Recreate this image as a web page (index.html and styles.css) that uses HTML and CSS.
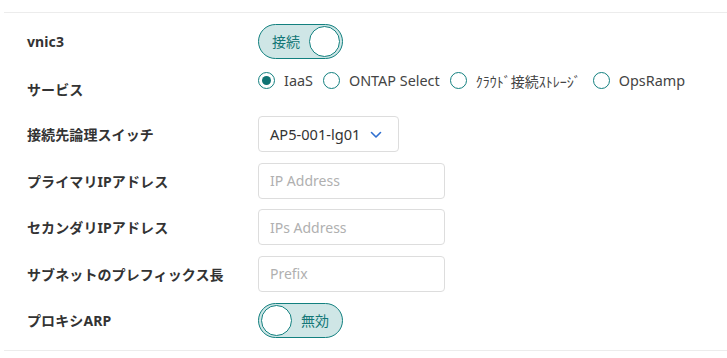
FILE: index.html
```html
<!DOCTYPE html>
<html lang="ja">
<head>
<meta charset="utf-8">
<link rel="stylesheet" href="styles.css">
</head>
<body>
<div class="panel">
  <div class="row">
    <div class="label">vnic3</div>
    <div class="control">
      <div class="toggle on"><span class="ttext">接続</span><span class="knob"></span></div>
    </div>
  </div>
  <div class="row">
    <div class="label label-low">サービス</div>
    <div class="control control-top">
      <label class="radio"><span class="dot checked"></span><span>IaaS</span></label>
      <label class="radio"><span class="dot"></span><span>ONTAP Select</span></label>
      <label class="radio"><span class="dot"></span><span class="hw">ｸﾗｳﾄﾞ接続ｽﾄﾚｰｼﾞ</span></label>
      <label class="radio"><span class="dot"></span><span>OpsRamp</span></label>
    </div>
  </div>
  <div class="row">
    <div class="label">接続先論理スイッチ</div>
    <div class="control">
      <div class="select"><span>AP5-001-lg01</span>
        <svg class="chev" width="12" height="8" viewBox="0 0 12 8"><path d="M1.5 1.5 L6 6 L10.5 1.5" fill="none" stroke="#2f6fd0" stroke-width="1.6" stroke-linecap="round" stroke-linejoin="round"/></svg>
      </div>
    </div>
  </div>
  <div class="row">
    <div class="label">プライマリIPアドレス</div>
    <div class="control"><div class="input">IP Address</div></div>
  </div>
  <div class="row">
    <div class="label">セカンダリIPアドレス</div>
    <div class="control"><div class="input">IPs Address</div></div>
  </div>
  <div class="row">
    <div class="label">サブネットのプレフィックス長</div>
    <div class="control"><div class="input">Prefix</div></div>
  </div>
  <div class="row">
    <div class="label">プロキシARP</div>
    <div class="control">
      <div class="toggle off"><span class="knob"></span><span class="ttext">無効</span></div>
    </div>
  </div>
</div>
</body>
</html>
```
FILE: styles.css
```css
html, body {
  margin: 0;
  padding: 0;
  background: #fff;
}
body {
  font-family: "Noto Sans", "Noto Sans CJK JP", sans-serif;
  color: #333;
}
.panel {
  margin: 12px 0 0 4px;
  border-top: 1px solid #ececec;
  border-bottom: 1px solid #ececec;
  padding: 5px 0 6px 23px;
}
.row {
  display: flex;
  align-items: center;
  height: 46.5px;
}
.label {
  width: 231px;
  flex: none;
  font-weight: bold;
  font-size: 14px;
  color: #333;
  letter-spacing: 0.1px;
}
.label-low {
  margin-top: 2px;
}
.control {
  display: flex;
  align-items: center;
}
.control-top {
  align-self: flex-start;
  margin-top: 6px;
  gap: 10px;
}
.toggle {
  box-sizing: border-box;
  width: 85px;
  height: 35px;
  border: 1.5px solid #12807f;
  border-radius: 18px;
  background: #cfe6e6;
  display: flex;
  align-items: center;
  padding: 0 2px;
}
.toggle.on {
  justify-content: space-between;
  padding-left: 13px;
}
.toggle.off {
  justify-content: space-between;
  padding-right: 13px;
}
.ttext {
  font-family: "Noto Sans CJK JP", sans-serif;
  font-size: 14px;
  color: #137777;
}
.knob {
  box-sizing: border-box;
  width: 31px;
  height: 31px;
  border-radius: 50%;
  background: #fff;
  border: 1.6px solid #12807f;
}
.radio {
  display: flex;
  align-items: center;
  gap: 9px;
  font-size: 14.4px;
  color: #444;
}
.dot {
  box-sizing: border-box;
  width: 17px;
  height: 17px;
  border-radius: 50%;
  border: 1.5px solid #12807f;
  background: #fff;
  position: relative;
}
.dot.checked::after {
  content: "";
  position: absolute;
  left: 2.5px;
  top: 2.5px;
  width: 9px;
  height: 9px;
  border-radius: 50%;
  background: #107474;
}
.hw {
  font-family: "Noto Sans CJK JP", sans-serif;
  font-size: 14px;
  margin-right: 2px;
}
.select {
  box-sizing: border-box;
  width: 141px;
  height: 36px;
  border: 1px solid #ddd;
  border-radius: 4px;
  display: flex;
  align-items: center;
  justify-content: space-between;
  padding: 0 16px 0 11px;
  font-size: 14.6px;
  color: #333;
}
.chev {
  margin-top: 1px;
}
.input {
  box-sizing: border-box;
  width: 187px;
  height: 36px;
  border: 1px solid #ddd;
  border-radius: 4px;
  display: flex;
  align-items: center;
  padding-left: 11px;
  font-size: 14px;
  color: #b0b0b0;
}
```
